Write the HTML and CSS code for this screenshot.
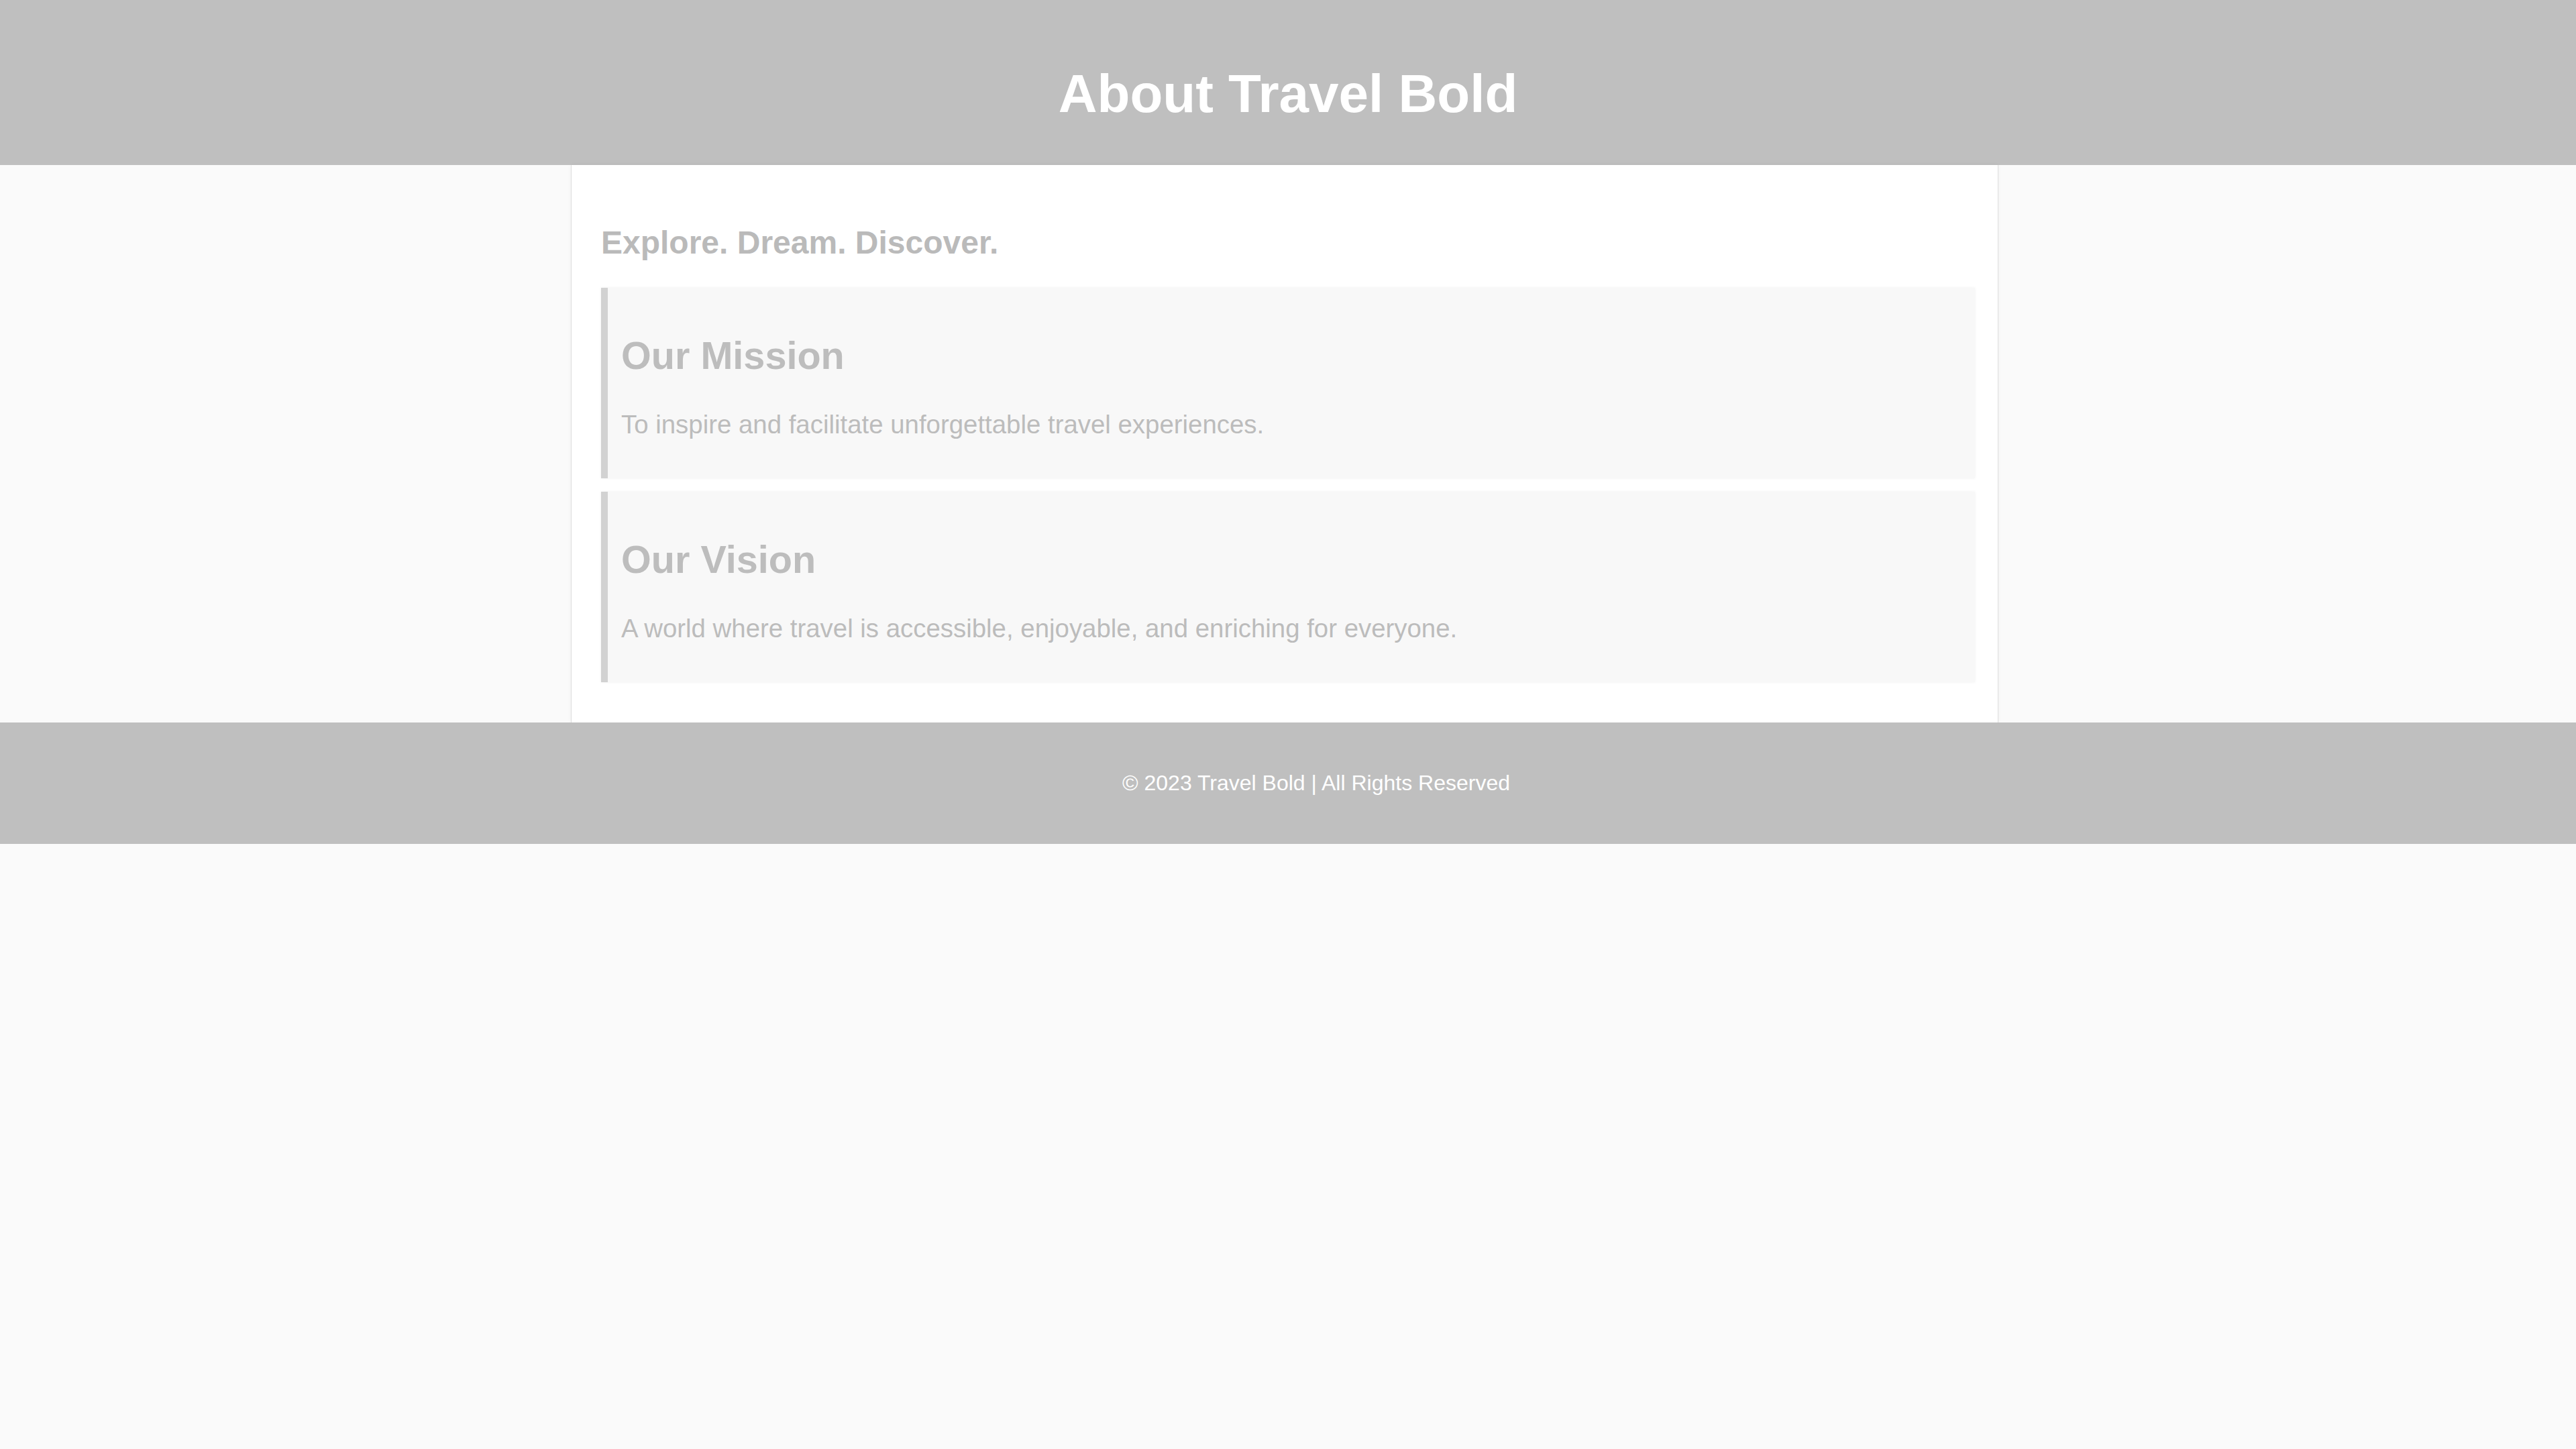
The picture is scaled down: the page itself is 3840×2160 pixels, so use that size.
FILE: index.html
```html
<!DOCTYPE html>
<html lang="en">
<head>
<meta charset="utf-8">
<title>About Travel Bold</title>
<link rel="stylesheet" href="styles.css">
</head>
<body>
<header class="site-header">
  <h1 class="site-title">About Travel Bold</h1>
</header>
<main class="about">
  <p class="tagline">Explore. Dream. Discover.</p>
  <section class="card">
    <h2 class="card-title">Our Mission</h2>
    <p class="card-text">To inspire and facilitate unforgettable travel experiences.</p>
  </section>
  <section class="card">
    <h2 class="card-title">Our Vision</h2>
    <p class="card-text">A world where travel is accessible, enjoyable, and enriching for everyone.</p>
  </section>
</main>
<footer class="site-footer">
  <p class="footer-text">© 2023 Travel Bold | All Rights Reserved</p>
</footer>
</body>
</html>
```

FILE: styles.css
```css
html, body {
  margin: 0;
  padding: 0;
  background: #fafafa;
  font-family: "Liberation Sans", Arial, sans-serif;
}

.site-header {
  background: #bfbfbf;
  padding: 40px 0 60px;
}

.site-title {
  margin: 54px 0 0;
  font-size: 80px;
  line-height: 92px;
  font-weight: 700;
  color: #ffffff;
  text-align: center;
}

.about {
  box-sizing: border-box;
  width: 2128px;
  margin-left: calc(50% - 1069px);
  background: #ffffff;
  border-left: 1px solid #dedede;
  border-right: 1px solid #dedede;
  box-shadow: 0 0 6px rgba(0, 0, 0, 0.04);
  padding: 40px 34px 40px 44px;
}

.tagline {
  margin: 48px 0 40px;
  font-size: 48px;
  line-height: 55px;
  font-weight: 700;
  color: #bababa;
}

.card {
  background: #f8f8f8;
  border-left: 10px solid #d2d2d2;
  padding: 20px;
  margin-bottom: 20px;
  box-shadow: 0 0 4px rgba(0, 0, 0, 0.06);
}

.card-title {
  margin: 48px 0;
  font-size: 57.6px;
  line-height: 66px;
  font-weight: 700;
  color: #bdbdbd;
}

.card-text {
  margin: 38px 0;
  font-size: 38.4px;
  line-height: 44px;
  color: #bcbcbc;
}

.site-footer {
  background: #bfbfbf;
  padding: 40px 0 40px 84px;
}

.footer-text {
  margin: 32px 0;
  font-size: 32px;
  line-height: 37px;
  color: #ffffff;
  text-align: center;
}
```
